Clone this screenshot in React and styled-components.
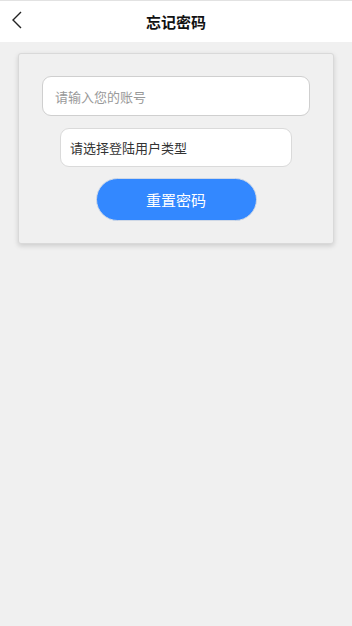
import React from 'react';
import styled, { createGlobalStyle } from "styled-components";

const Global = createGlobalStyle`
  html, body {
    margin: 0;
    padding: 0;
    background: #f0f0f0;
    font-family: "Noto Sans CJK SC", "Liberation Sans", sans-serif;
  }
  * { box-sizing: border-box; }
`

const Page = styled.div`
  min-height: 626px;
  background: #f0f0f0;
`
const Header = styled.div`
  height: 42px;
  background: #fff;
  border-top: 1px solid #e2e2e2;
  display: flex;
  align-items: center;
  justify-content: center;
  position: relative;
`
const Back = styled.div`
  position: absolute;
  left: 11px;
  top: 9px;
  width: 14px;
  height: 20px;
  display: flex;
  align-items: center;
`
const Title = styled.h1`
  margin: 0;
  font-size: 15px;
  font-weight: 700;
  color: #111;
`
const Card = styled.div`
  margin: 11px 18px 0;
  background: #f0f0f0;
  border: 1px solid #d9d9d9;
  border-radius: 3px;
  box-shadow: 0 2px 5px rgba(0,0,0,0.15);
  padding: 22px 0 22px;
  display: flex;
  flex-direction: column;
  align-items: center;
`
const Input = styled.input`
  width: ${p => p.$w}px;
  height: 40px;
  border: 1px solid #cfcfcf;
  border-radius: 9px;
  background: #fff;
  padding: 0 12px;
  font-family: inherit;
  font-size: 13px;
  color: #333;
  outline: none;
  &::placeholder { color: #999; }
`
const Picker = styled.div`
  width: ${p => p.$w}px;
  height: 39px;
  margin-top: 12px;
  border: 1px solid #dadada;
  border-radius: 9px;
  background: #fff;
  padding: 0 9px;
  display: flex;
  align-items: center;
  font-size: 13px;
  color: #333;
`
const Button = styled.button`
  width: 161px;
  height: 43px;
  margin-top: 11px;
  border: 1px solid #cfd8e6;
  border-radius: 22px;
  background: #3388ff;
  color: #fff;
  font-family: inherit;
  font-size: 15px;
`

const App = () => {
  return (
    <Page>
      <Global />
      <Header>
        <Back>
          <svg width="12" height="18" viewBox="0 0 12 18">
            <path d="M10 1 L2 9 L10 17" fill="none" stroke="#222" strokeWidth="1.4" />
          </svg>
        </Back>
        <Title>忘记密码</Title>
      </Header>
      <Card>
        <Input $w={268} placeholder="请输入您的账号" />
        <Picker $w={232}>请选择登陆用户类型</Picker>
        <Button>重置密码</Button>
      </Card>
    </Page>
  )
}
export default App;
